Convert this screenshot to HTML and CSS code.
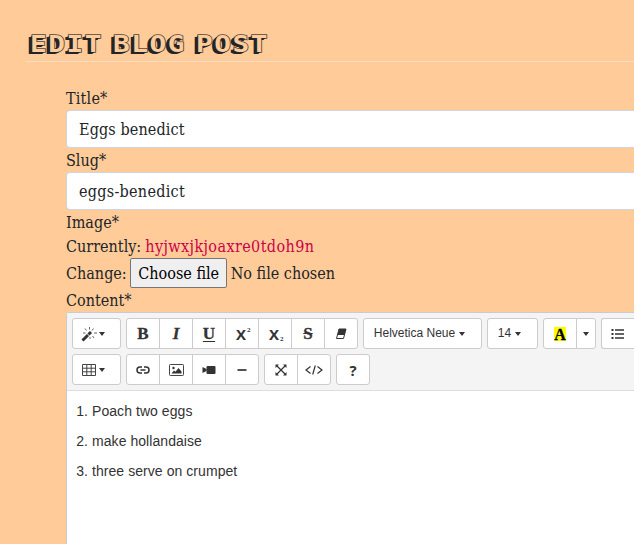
FILE: index.html
```
<!DOCTYPE html>
<html lang="en">
<head>
<meta charset="utf-8">
<title>Edit Blog Post</title>
<link rel="stylesheet" href="styles.css">
</head>
<body>
<main class="page">
  <h1 class="heading"><span>EDIT</span><span>BLOG</span><span>POST</span></h1>
  <form class="form">
    <label class="label"><span class="t-title">Title*</span></label>
    <div class="field"><span class="t-eggs">Eggs benedict</span></div>
    <label class="label"><span>Slug*</span></label>
    <div class="field"><span class="t-slugval">eggs-benedict</span></div>
    <label class="label"><span>Image*</span></label>
    <div class="row"><span>Currently:</span><a class="link">hyjwxjkjoaxre0tdoh9n</a></div>
    <div class="row file"><span>Change:</span><button type="button" class="choose">Choose file</button><span>No file chosen</span></div>
    <label class="label"><span>Content*</span></label>
    <section class="editor">
      <div class="toolbar">
        <div class="tools">
          <div class="group"><button type="button" class="wide"><svg width="17" height="16" viewBox="0 0 17 16"><path d="M1.500 14.500 7 9" stroke="#333" stroke-width="3"/><path d="m7.500 8.500 2.500-2.500" stroke="#333" stroke-width="3"/><path d="M8.500 1v2.500M4 2.500l1.500 2M2 7h2.500M12.500 2.500l-1.500 2M13 7h3M11.500 10l1.500 2M9 11v2" stroke="#555" stroke-width=".9"/></svg><i class="caret"></i></button></div>
          <div class="group">
            <button type="button"><b class="serif">B</b></button>
            <button type="button"><em class="serif">I</em></button>
            <button type="button"><span class="serif under">U</span></button>
            <button type="button"><span class="x">X<sup>2</sup></span></button>
            <button type="button"><span class="x">X<sub>2</sub></span></button>
            <button type="button"><s class="serif">S</s></button>
            <button type="button"><svg width="12" height="12" viewBox="0 0 12 12"><path d="M4 1h7L8.500 10.500h-7z" fill="#fff" stroke="#333"/><path d="M4 1h7L9.500 7h-7z" fill="#333"/></svg></button>
          </div>
          <div class="group"><button type="button" class="font">Helvetica Neue<i class="caret"></i></button></div>
          <div class="group"><button type="button" class="size">14<i class="caret"></i></button></div>
          <div class="group"><button type="button"><span class="mark">A</span></button><button type="button" class="drop"><i class="caret"></i></button></div>
          <div class="group"><button type="button" class="list"><svg width="14" height="12" viewBox="0 0 14 12"><path d="M4 2h9M4 6h9M4 10h9" stroke="#333" stroke-width="1.700"/><path d="M.5 2h2M.5 6h2M.5 10h2" stroke="#333" stroke-width="2"/></svg></button></div>
        </div>
        <div class="tools">
          <div class="group"><button type="button" class="wide"><svg width="17" height="12" viewBox="0 0 17 12"><path d="M1.500.5h13v11h-13zM1.500 4.200h13M1.500 7.800h13M5.800.5v11M10.200.5v11" fill="none" stroke="#444"/></svg><i class="caret"></i></button></div>
          <div class="group">
            <button type="button"><svg width="14" height="8" viewBox="0 0 14 8"><path d="M6 1H4a3 3 0 0 0 0 6h2M8 1h2a3 3 0 0 1 0 6H8M4.500 4h5" fill="none" stroke="#333" stroke-width="1.500"/></svg></button>
            <button type="button"><svg width="15" height="12" viewBox="0 0 15 12"><rect x=".5" y=".5" width="14" height="11" rx=".8" fill="#fff" stroke="#444"/><circle cx="4.500" cy="4" r="1.200" fill="#333"/><path d="m2.500 9.500 2.500-3 1.500 1.200L9.500 4l3 3.500v2z" fill="#333"/></svg></button>
            <button type="button"><svg width="14" height="10" viewBox="0 0 14 10"><rect x="4.500" y="1" width="9" height="8" rx="1" fill="#333"/><path d="M.5 2 4.500 4v2l-4 2z" fill="#333"/></svg></button>
            <button type="button"><svg width="10" height="4" viewBox="0 0 10 4"><path d="M.5 2h9" stroke="#333" stroke-width="1.700"/></svg></button>
          </div>
          <div class="group">
            <button type="button"><svg width="12" height="12" viewBox="0 0 12 12"><path d="m2 2 8 8M10 2l-8 8" stroke="#333" stroke-width="1.200"/><path d="M.5.5H4L.5 4zM11.500.5H8L11.500 4zM.5 11.500H4L.5 8zM11.500 11.500H8L11.500 8z" fill="#333"/></svg></button>
            <button type="button"><svg width="18" height="10" viewBox="0 0 18 10"><path d="m5.500 1.500-4.500 3.500 4.500 3.500M12.500 1.500l4.500 3.500-4.500 3.500M10.300.5 7.700 9.500" fill="none" stroke="#333" stroke-width="1.200"/></svg></button>
          </div>
          <div class="group"><button type="button"><b class="help">?</b></button></div>
        </div>
      </div>
      <ol class="content">
        <li>Poach two eggs</li>
        <li>make hollandaise</li>
        <li>three serve on crumpet</li>
      </ol>
    </section>
  </form>
</main>
</body>
</html>
```
FILE: styles.css
```
* { box-sizing: border-box; }
body {
  margin: 0;
  background: #ffcc99;
  color: #212529;
  font: 16px/24px "Roboto Slab", "DejaVu Serif Condensed", "DejaVu Serif", serif;
}
.page { display: flex; flex-direction: column; height: 544px; padding-top: 27px; }
.heading {
  display: flex;
  flex: none;
  gap: 4px;
  height: 35px;
  margin: 0 0 0 26px;
  padding-left: 4px;
  border-bottom: 1px solid #f5dcc4;
  font: bold 23.500px/34px "DejaVu Sans Mono", monospace;
  color: #ffcc99;
  -webkit-text-stroke: 1.500px #54443a;
  paint-order: stroke fill;
  text-shadow: -1px 1px #212529, -2px 2px #212529, -3px 2px #212529;
}
.heading span {
  width: 79px;
  letter-spacing: 1.300px;
  transform: scaleX(1.180);
  transform-origin: 0 50%;
}
.form {
  display: flex;
  flex: 1;
  flex-direction: column;
  min-height: 0;
  padding: 25px 0 0 66px;
}
.label, .row { display: flex; flex: none; height: 24px; line-height: 26px; white-space: nowrap; }
.form > .label:first-child { height: 23px; line-height: 23px; }
.field {
  flex: none;
  height: 38px;
  padding: 0 12px;
  border: 1px solid #ced4da;
  border-right: 0;
  border-radius: 4px 0 0 4px;
  background: #fff;
  line-height: 38px;
}
.t-title { letter-spacing: .2px; }
.t-eggs { letter-spacing: .12px; }
.t-slugval { letter-spacing: .28px; }
.row { gap: 4px; }
.link { color: #cc0049; letter-spacing: .4px; }
.row.file { height: 30px; gap: 3.500px; line-height: 32px; }
.choose {
  width: 97px;
  height: 30px;
  padding: 2px 0 0;
  border: 1px solid #767676;
  border-radius: 2px;
  background: #efefef;
  color: #000;
  font: inherit;
  line-height: 26px;
}
.editor {
  flex: 1;
  min-height: 0;
  border: 1px solid #c8ccd0;
  border-width: 1px 0 0 1px;
  border-radius: 3px 0 0 0;
  background: #fff;
  color: #333;
  font-family: "Liberation Sans", sans-serif;
}
.toolbar {
  display: flex;
  flex-direction: column;
  gap: 5px;
  height: 78px;
  padding: 5px 0 5px 5px;
  border-bottom: 1px solid #ddd;
  background: #f4f4f4;
}
.tools { display: flex; gap: 5px; }
.group { display: flex; }
.group button {
  display: flex;
  align-items: center;
  justify-content: center;
  width: 34px;
  height: 31px;
  margin: 0 0 0 -1px;
  padding: 0;
  border: 1px solid #ccc;
  background: #fff;
  color: #333;
  font: 12px/18px "Liberation Sans", sans-serif;
}
.group button:first-child { margin-left: 0; border-radius: 3px 0 0 3px; }
.group button:last-child { border-radius: 0 3px 3px 0; }
.group button:only-child { border-radius: 3px; }
.group .wide { width: 49px; padding-right: 8px; }
.wide .caret { margin-left: 1px; }
.group .font { width: 119px; padding: 0 6px 2px 0; }
.group .size { width: 51px; padding: 0 6px 2px 0; }
.group .drop { width: 20px; }
.group .list:only-child { width: 33px; border-right: 0; border-radius: 3px 0 0 3px; }
.caret { border: 3px solid transparent; border-top: 4px solid #333; border-bottom: 0; }
.font .caret, .size .caret { margin: 2px 0 0 4px; }
.serif { font: bold 17px/18px "Liberation Serif", serif; -webkit-text-stroke: .3px #333; }
em.serif { font-style: italic; }
.under { text-decoration: underline; text-underline-offset: 2px; }
.x { position: relative; margin-right: 2px; font: bold 15px/18px "Open Sans", sans-serif; }
.x sup, .x sub { position: absolute; left: 11px; font: bold 7px/7px "Liberation Serif", serif; }
.x sup { top: 2px; }
.x sub { top: 11px; }
.mark {
  width: 12px;
  height: 14px;
  background: #ff0;
  color: #000;
  font: bold 16px/15px "Liberation Serif", serif;
  -webkit-text-stroke: .3px #000;
}
.help { font: bold 15px/18px "Open Sans", sans-serif; }
.content { margin: 0; padding: 10px 0 0 25px; font-size: 14px; line-height: 20px; letter-spacing: .06px; }
.content li { margin-bottom: 10px; }
```
